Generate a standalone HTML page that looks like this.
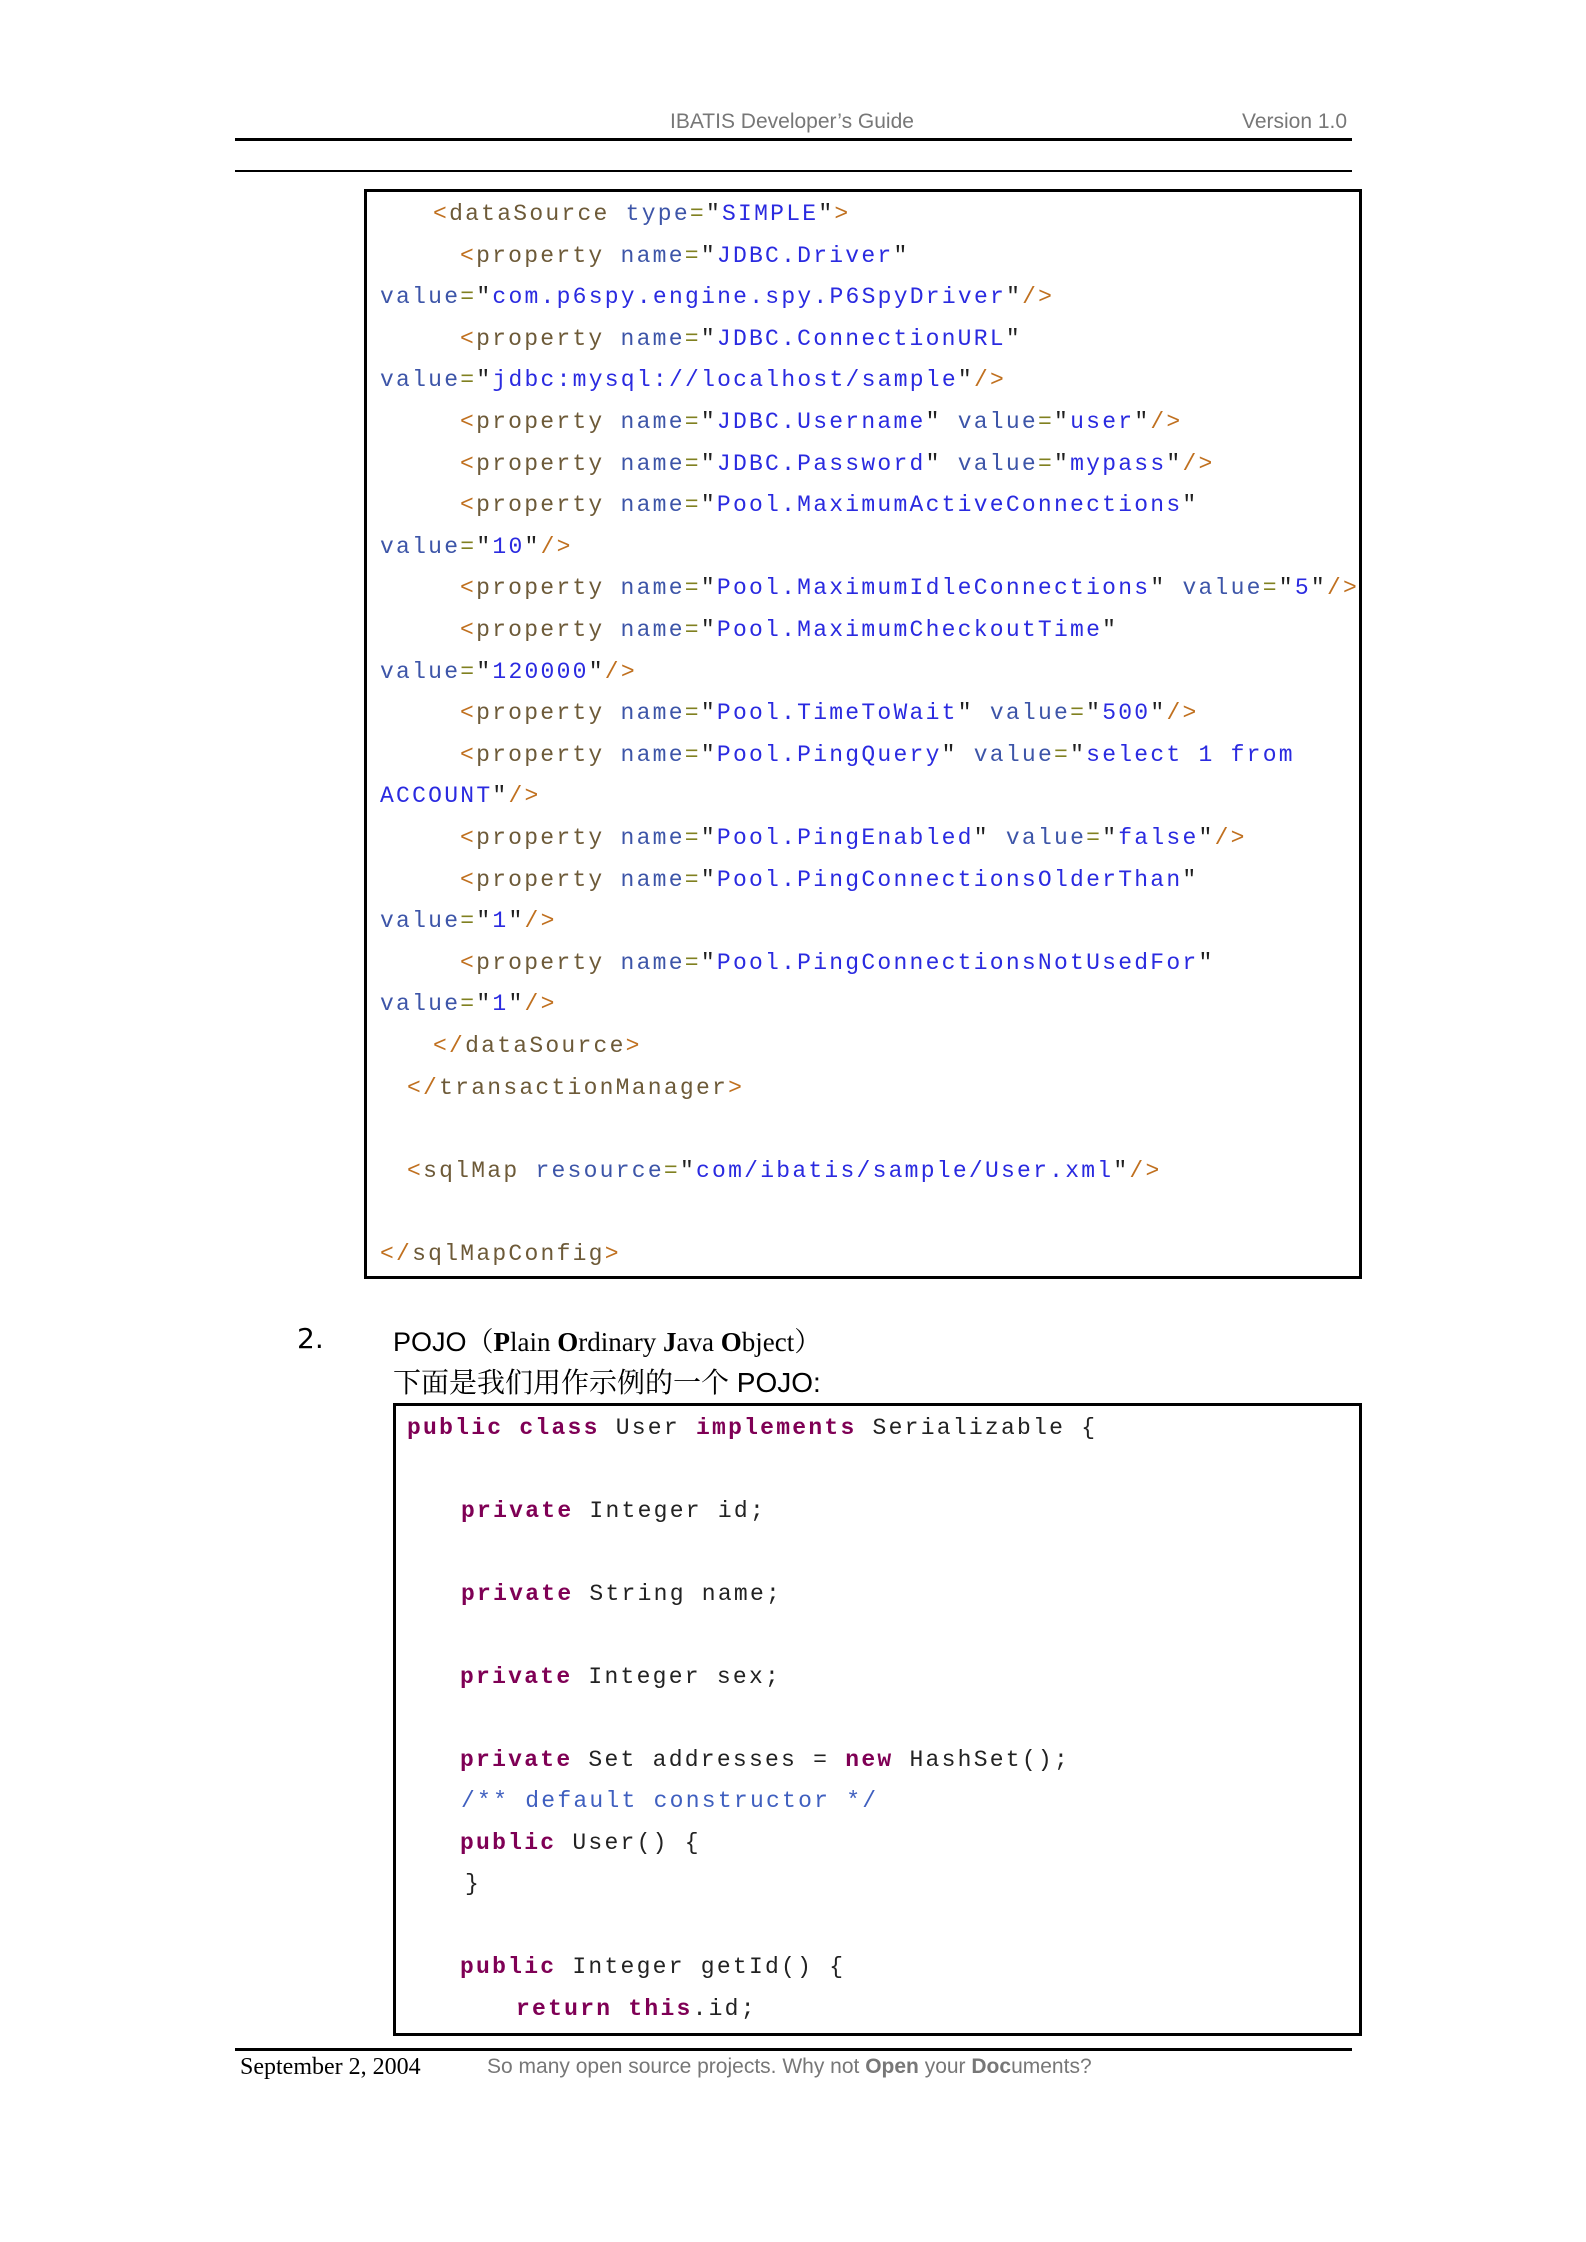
<!DOCTYPE html>
<html><head><meta charset="utf-8"><style>
body{margin:0;background:#fff;}
#p{position:relative;width:1586px;height:2242px;overflow:hidden;background:#fff;}
.a{position:absolute;white-space:pre;}
.c{font-family:"Liberation Mono",monospace;font-size:23px;letter-spacing:2.25px;line-height:30px;height:30px;}
.b{color:#c0701f}.t{color:#6d5a38}.n{color:#3d55a8}.e{color:#808020}.q{color:#202020}.v{color:#2a2ae0}
.k{color:#7f0055;font-weight:bold}.j{color:#222}.cm{color:#3f5fbf}
.hl{position:absolute;background:#000;}
.hd{font-family:"Liberation Sans",sans-serif;font-size:21px;color:#777;}
</style></head><body><div id="p">
<div class="a hd" style="left:670px;top:110px;">IBATIS Developer’s Guide</div>
<div class="a hd" style="left:1242px;top:110px;">Version 1.0</div>
<div class="hl" style="left:235px;top:138px;width:1117px;height:3px;"></div>
<div class="hl" style="left:235px;top:170px;width:1117px;height:2px;"></div>

<div style="position:absolute;left:364px;top:189px;width:992px;height:1084px;border:3px solid #000;"></div>
<div class="a c" style="left:433px;top:199px;"><span class="b">&lt;</span><span class="t">dataSource</span> <span class="n">type</span><span class="e">=</span><span class="q">"</span><span class="v">SIMPLE</span><span class="q">"</span><span class="b">&gt;</span></div>
<div class="a c" style="left:460px;top:241px;"><span class="b">&lt;</span><span class="t">property</span> <span class="n">name</span><span class="e">=</span><span class="q">"</span><span class="v">JDBC.Driver</span><span class="q">"</span></div>
<div class="a c" style="left:380px;top:282px;"><span class="n">value</span><span class="e">=</span><span class="q">"</span><span class="v">com.p6spy.engine.spy.P6SpyDriver</span><span class="q">"</span><span class="b">/&gt;</span></div>
<div class="a c" style="left:460px;top:324px;"><span class="b">&lt;</span><span class="t">property</span> <span class="n">name</span><span class="e">=</span><span class="q">"</span><span class="v">JDBC.ConnectionURL</span><span class="q">"</span></div>
<div class="a c" style="left:380px;top:365px;"><span class="n">value</span><span class="e">=</span><span class="q">"</span><span class="v">jdbc:mysql://localhost/sample</span><span class="q">"</span><span class="b">/&gt;</span></div>
<div class="a c" style="left:460px;top:407px;"><span class="b">&lt;</span><span class="t">property</span> <span class="n">name</span><span class="e">=</span><span class="q">"</span><span class="v">JDBC.Username</span><span class="q">"</span> <span class="n">value</span><span class="e">=</span><span class="q">"</span><span class="v">user</span><span class="q">"</span><span class="b">/&gt;</span></div>
<div class="a c" style="left:460px;top:449px;"><span class="b">&lt;</span><span class="t">property</span> <span class="n">name</span><span class="e">=</span><span class="q">"</span><span class="v">JDBC.Password</span><span class="q">"</span> <span class="n">value</span><span class="e">=</span><span class="q">"</span><span class="v">mypass</span><span class="q">"</span><span class="b">/&gt;</span></div>
<div class="a c" style="left:460px;top:490px;"><span class="b">&lt;</span><span class="t">property</span> <span class="n">name</span><span class="e">=</span><span class="q">"</span><span class="v">Pool.MaximumActiveConnections</span><span class="q">"</span></div>
<div class="a c" style="left:380px;top:532px;"><span class="n">value</span><span class="e">=</span><span class="q">"</span><span class="v">10</span><span class="q">"</span><span class="b">/&gt;</span></div>
<div class="a c" style="left:460px;top:573px;"><span class="b">&lt;</span><span class="t">property</span> <span class="n">name</span><span class="e">=</span><span class="q">"</span><span class="v">Pool.MaximumIdleConnections</span><span class="q">"</span> <span class="n">value</span><span class="e">=</span><span class="q">"</span><span class="v">5</span><span class="q">"</span><span class="b">/&gt;</span></div>
<div class="a c" style="left:460px;top:615px;"><span class="b">&lt;</span><span class="t">property</span> <span class="n">name</span><span class="e">=</span><span class="q">"</span><span class="v">Pool.MaximumCheckoutTime</span><span class="q">"</span></div>
<div class="a c" style="left:380px;top:657px;"><span class="n">value</span><span class="e">=</span><span class="q">"</span><span class="v">120000</span><span class="q">"</span><span class="b">/&gt;</span></div>
<div class="a c" style="left:460px;top:698px;"><span class="b">&lt;</span><span class="t">property</span> <span class="n">name</span><span class="e">=</span><span class="q">"</span><span class="v">Pool.TimeToWait</span><span class="q">"</span> <span class="n">value</span><span class="e">=</span><span class="q">"</span><span class="v">500</span><span class="q">"</span><span class="b">/&gt;</span></div>
<div class="a c" style="left:460px;top:740px;"><span class="b">&lt;</span><span class="t">property</span> <span class="n">name</span><span class="e">=</span><span class="q">"</span><span class="v">Pool.PingQuery</span><span class="q">"</span> <span class="n">value</span><span class="e">=</span><span class="q">"</span><span class="v">select 1 from</span></div>
<div class="a c" style="left:380px;top:781px;"><span class="v">ACCOUNT</span><span class="q">"</span><span class="b">/&gt;</span></div>
<div class="a c" style="left:460px;top:823px;"><span class="b">&lt;</span><span class="t">property</span> <span class="n">name</span><span class="e">=</span><span class="q">"</span><span class="v">Pool.PingEnabled</span><span class="q">"</span> <span class="n">value</span><span class="e">=</span><span class="q">"</span><span class="v">false</span><span class="q">"</span><span class="b">/&gt;</span></div>
<div class="a c" style="left:460px;top:865px;"><span class="b">&lt;</span><span class="t">property</span> <span class="n">name</span><span class="e">=</span><span class="q">"</span><span class="v">Pool.PingConnectionsOlderThan</span><span class="q">"</span></div>
<div class="a c" style="left:380px;top:906px;"><span class="n">value</span><span class="e">=</span><span class="q">"</span><span class="v">1</span><span class="q">"</span><span class="b">/&gt;</span></div>
<div class="a c" style="left:460px;top:948px;"><span class="b">&lt;</span><span class="t">property</span> <span class="n">name</span><span class="e">=</span><span class="q">"</span><span class="v">Pool.PingConnectionsNotUsedFor</span><span class="q">"</span></div>
<div class="a c" style="left:380px;top:989px;"><span class="n">value</span><span class="e">=</span><span class="q">"</span><span class="v">1</span><span class="q">"</span><span class="b">/&gt;</span></div>
<div class="a c" style="left:433px;top:1031px;"><span class="b">&lt;/</span><span class="t">dataSource</span><span class="b">&gt;</span></div>
<div class="a c" style="left:407px;top:1073px;"><span class="b">&lt;/</span><span class="t">transactionManager</span><span class="b">&gt;</span></div>
<div class="a c" style="left:407px;top:1156px;"><span class="b">&lt;</span><span class="t">sqlMap</span> <span class="n">resource</span><span class="e">=</span><span class="q">"</span><span class="v">com/ibatis/sample/User.xml</span><span class="q">"</span><span class="b">/&gt;</span></div>
<div class="a c" style="left:380px;top:1239px;"><span class="b">&lt;/</span><span class="t">sqlMapConfig</span><span class="b">&gt;</span></div>

<div class="a" style="left:297px;top:1322px;font-family:'DejaVu Sans',sans-serif;font-size:28px;color:#000;">2.</div>
<div class="a" style="left:393px;top:1320px;font-size:27px;color:#000;"><span style="font-family:'Liberation Sans',sans-serif;">POJO</span><span style="font-family:'Noto Serif CJK SC',serif;">（</span><span style="font-family:'Liberation Serif',serif;"><b>P</b>lain <b>O</b>rdinary <b>J</b>ava <b>O</b>bject</span><span style="font-family:'Noto Serif CJK SC',serif;">）</span></div>
<div class="a" style="left:393px;top:1361px;font-size:28px;color:#000;"><span style="font-family:'Noto Serif CJK SC',serif;">下面是我们用作示例的一个</span><span style="font-family:'Liberation Sans',sans-serif;"> POJO:</span></div>

<div style="position:absolute;left:393px;top:1403px;width:963px;height:627px;border:3px solid #000;"></div>
<div class="a c" style="left:407px;top:1413px;"><span class="k">public class</span><span class="j"> User </span><span class="k">implements</span><span class="j"> Serializable {</span></div>
<div class="a c" style="left:461px;top:1496px;"><span class="k">private</span><span class="j"> Integer id;</span></div>
<div class="a c" style="left:461px;top:1579px;"><span class="k">private</span><span class="j"> String name;</span></div>
<div class="a c" style="left:460px;top:1662px;"><span class="k">private</span><span class="j"> Integer sex;</span></div>
<div class="a c" style="left:460px;top:1745px;"><span class="k">private</span><span class="j"> Set addresses = </span><span class="k">new</span><span class="j"> HashSet();</span></div>
<div class="a c" style="left:461px;top:1786px;"><span class="cm">/** default constructor */</span></div>
<div class="a c" style="left:460px;top:1828px;"><span class="k">public</span><span class="j"> User() {</span></div>
<div class="a c" style="left:465px;top:1869px;"><span class="j">}</span></div>
<div class="a c" style="left:460px;top:1952px;"><span class="k">public</span><span class="j"> Integer getId() {</span></div>
<div class="a c" style="left:516px;top:1994px;"><span class="k">return this</span><span class="j">.id;</span></div>

<div class="hl" style="left:235px;top:2048px;width:1117px;height:3px;"></div>
<div class="a" style="left:240px;top:2054px;font-family:'Liberation Serif',serif;font-size:24px;color:#000;">September 2, 2004</div>
<div class="a" style="left:487px;top:2055px;font-family:'Liberation Sans',sans-serif;font-size:21px;color:#777;">So many open source projects. Why not <b>Open</b> your <b>Doc</b>uments?</div>
</div></body></html>
